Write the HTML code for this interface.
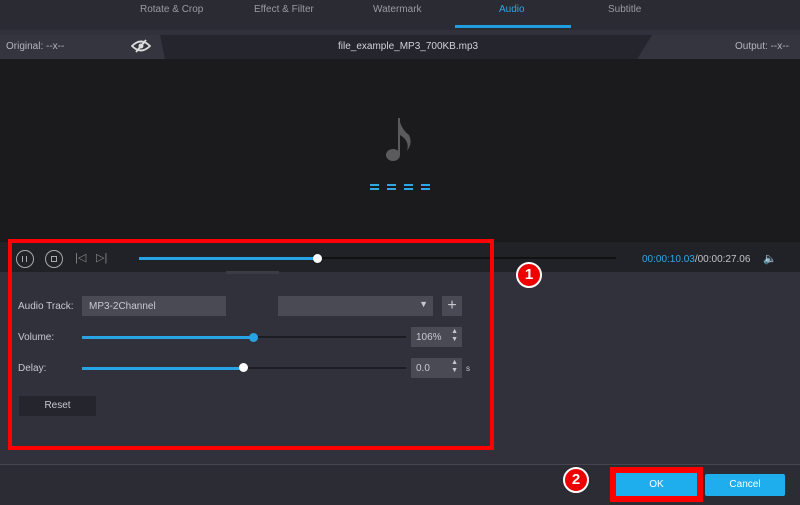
<!DOCTYPE html>
<html><head><style>
*{margin:0;padding:0;box-sizing:border-box}
body{width:800px;height:505px;overflow:hidden;background:#30313b;font-family:"Liberation Sans",sans-serif;font-size:10px;color:#c8c9cf;position:relative}
.a{position:absolute}
.eq{position:absolute;top:184px;width:9px;height:6px;border-top:2px solid #2ea7e6;border-bottom:2px solid #2ea7e6}
</style></head><body>
<div class="a" style="left:0;top:0;width:800px;height:30px;background:#2a2b33"></div>
<div class="a" style="top:4px;left:140px;color:#9a9ba2">Rotate &amp; Crop</div>
<div class="a" style="top:4px;left:254px;color:#9a9ba2">Effect &amp; Filter</div>
<div class="a" style="top:4px;left:373px;color:#9a9ba2">Watermark</div>
<div class="a" style="top:4px;left:499px;color:#2ea7e6">Audio</div>
<div class="a" style="top:4px;left:608px;color:#9a9ba2">Subtitle</div>
<div class="a" style="left:455px;top:25px;width:116px;height:3px;background:#1f9ede"></div>
<div class="a" style="left:0;top:35px;width:800px;height:24px;background:#34353e"></div>
<div class="a" style="left:160px;top:35px;width:492px;height:24px;background:#25262d;clip-path:polygon(0 0,100% 0,97% 100%,1% 100%)"></div>
<div class="a" style="top:41px;left:6px;color:#b5b6bc">Original: --x--</div>
<div class="a" style="top:41px;left:735px;color:#b5b6bc">Output: --x--</div>
<div class="a" style="top:41px;left:338px;color:#d0d1d6">file_example_MP3_700KB.mp3</div>
<svg class="a" style="left:131px;top:39px" width="20" height="14" viewBox="0 0 20 14"><path d="M1 7Q10-2 19 7Q10 16 1 7Z" fill="none" stroke="#ddd" stroke-width="1.8"/><circle cx="10" cy="7" r="2.5" fill="#ddd"/><path d="M5 13L15 1" stroke="#ddd" stroke-width="1.8"/></svg>
<div class="a" style="left:0;top:59px;width:800px;height:183px;background:#1b1b1d"></div>
<svg class="a" style="left:385px;top:115px" width="30" height="50" viewBox="0 0 30 50"><path d="M14 3V40" stroke="#5b5b5e" stroke-width="2"/><path d="M14 3Q16 14 24 20Q28 28 22 36Q25 26 15 20Z" fill="#5b5b5e"/><ellipse cx="8" cy="40" rx="7" ry="6" fill="#5b5b5e"/></svg>
<div class="eq" style="left:370px"></div><div class="eq" style="left:387px"></div><div class="eq" style="left:404px"></div><div class="eq" style="left:421px"></div>
<div class="a" style="left:0;top:242px;width:800px;height:30px;background:#212228"></div>
<div class="a" style="left:16px;top:250px;width:18px;height:18px;border:1.3px solid #aaa;border-radius:50%"><div class="a" style="left:5px;top:5px;width:1.3px;height:6px;background:#aaa"></div><div class="a" style="left:9px;top:5px;width:1.3px;height:6px;background:#aaa"></div></div>
<div class="a" style="left:45px;top:250px;width:18px;height:18px;border:1.3px solid #aaa;border-radius:50%"><div class="a" style="left:5px;top:5px;width:6px;height:6px;border:1.3px solid #aaa"></div></div>
<div class="a" style="left:75px;top:251px;color:#888;font-size:11px">|◁</div>
<div class="a" style="left:96px;top:251px;color:#888;font-size:11px">▷|</div>
<div class="a" style="left:139px;top:257px;width:477px;height:2px;background:#111"></div>
<div class="a" style="left:139px;top:257px;width:178px;height:3px;background:#27a4e3"></div>
<div class="a" style="left:313px;top:254px;width:9px;height:9px;border-radius:50%;background:#fff"></div>
<div class="a" style="left:642px;top:254px;color:#c0c1c6"><span style="color:#2ea7e6">00:00:10.03</span>/00:00:27.06</div>
<div class="a" style="left:763px;top:252px;color:#bbb;font-size:11px">🔈</div>
<div class="a" style="left:226px;top:271px;width:53px;height:3px;background:#3a3b44"></div>
<div class="a" style="left:18px;top:301px">Audio Track:</div>
<div class="a" style="left:82px;top:296px;width:144px;height:20px;background:#494a54;padding:5px 7px">MP3-2Channel</div>
<div class="a" style="left:278px;top:296px;width:155px;height:20px;background:#494a54"><span class="a" style="right:5px;top:3px;font-size:9px">▼</span></div>
<div class="a" style="left:442px;top:296px;width:20px;height:20px;background:#494a54;text-align:center;font-size:16px;line-height:19px">+</div>
<div class="a" style="left:18px;top:332px">Volume:</div>
<div class="a" style="left:82px;top:336px;width:324px;height:2px;background:#1c1d22"></div>
<div class="a" style="left:82px;top:336px;width:172px;height:3px;background:#27a4e3"></div>
<div class="a" style="left:249px;top:333px;width:9px;height:9px;border-radius:50%;background:#27a4e3"></div>
<div class="a" style="left:411px;top:327px;width:51px;height:20px;background:#494a54;padding:5px 5px">106%<span class="a" style="right:4px;top:1px;font-size:7px;line-height:8px">▲<br>▼</span></div>
<div class="a" style="left:18px;top:363px">Delay:</div>
<div class="a" style="left:82px;top:367px;width:324px;height:2px;background:#1c1d22"></div>
<div class="a" style="left:82px;top:367px;width:162px;height:3px;background:#27a4e3"></div>
<div class="a" style="left:239px;top:363px;width:9px;height:9px;border-radius:50%;background:#fff"></div>
<div class="a" style="left:411px;top:358px;width:51px;height:20px;background:#494a54;padding:5px 5px">0.0<span class="a" style="right:4px;top:1px;font-size:7px;line-height:8px">▲<br>▼</span></div>
<div class="a" style="left:466px;top:364px;font-size:8px">s</div>
<div class="a" style="left:19px;top:396px;width:77px;height:20px;background:#25262d;text-align:center;line-height:20px">Reset</div>
<div class="a" style="left:8px;top:239px;width:486px;height:211px;border:4px solid #f00"></div>
<div class="a" style="left:516px;top:262px;width:26px;height:26px;border-radius:50%;background:#e00;border:2px solid #fff;color:#fff;font-weight:bold;font-size:15px;text-align:center;line-height:22px">1</div>
<div class="a" style="left:0;top:464px;width:800px;height:41px;background:#2b2c34;border-top:1px solid #44454e"></div>
<div class="a" style="left:563px;top:467px;width:26px;height:26px;border-radius:50%;background:#e00;border:2px solid #fff;color:#fff;font-weight:bold;font-size:15px;text-align:center;line-height:22px">2</div>
<div class="a" style="left:610px;top:467px;width:93px;height:35px;background:#f00"></div>
<div class="a" style="left:616px;top:473px;width:81px;height:23px;background:#1eaeee;color:#fff;text-align:center;line-height:23px">OK</div>
<div class="a" style="left:705px;top:474px;width:80px;height:22px;background:#1eaeee;color:#fff;text-align:center;line-height:22px;border-radius:2px">Cancel</div>
</body></html>
